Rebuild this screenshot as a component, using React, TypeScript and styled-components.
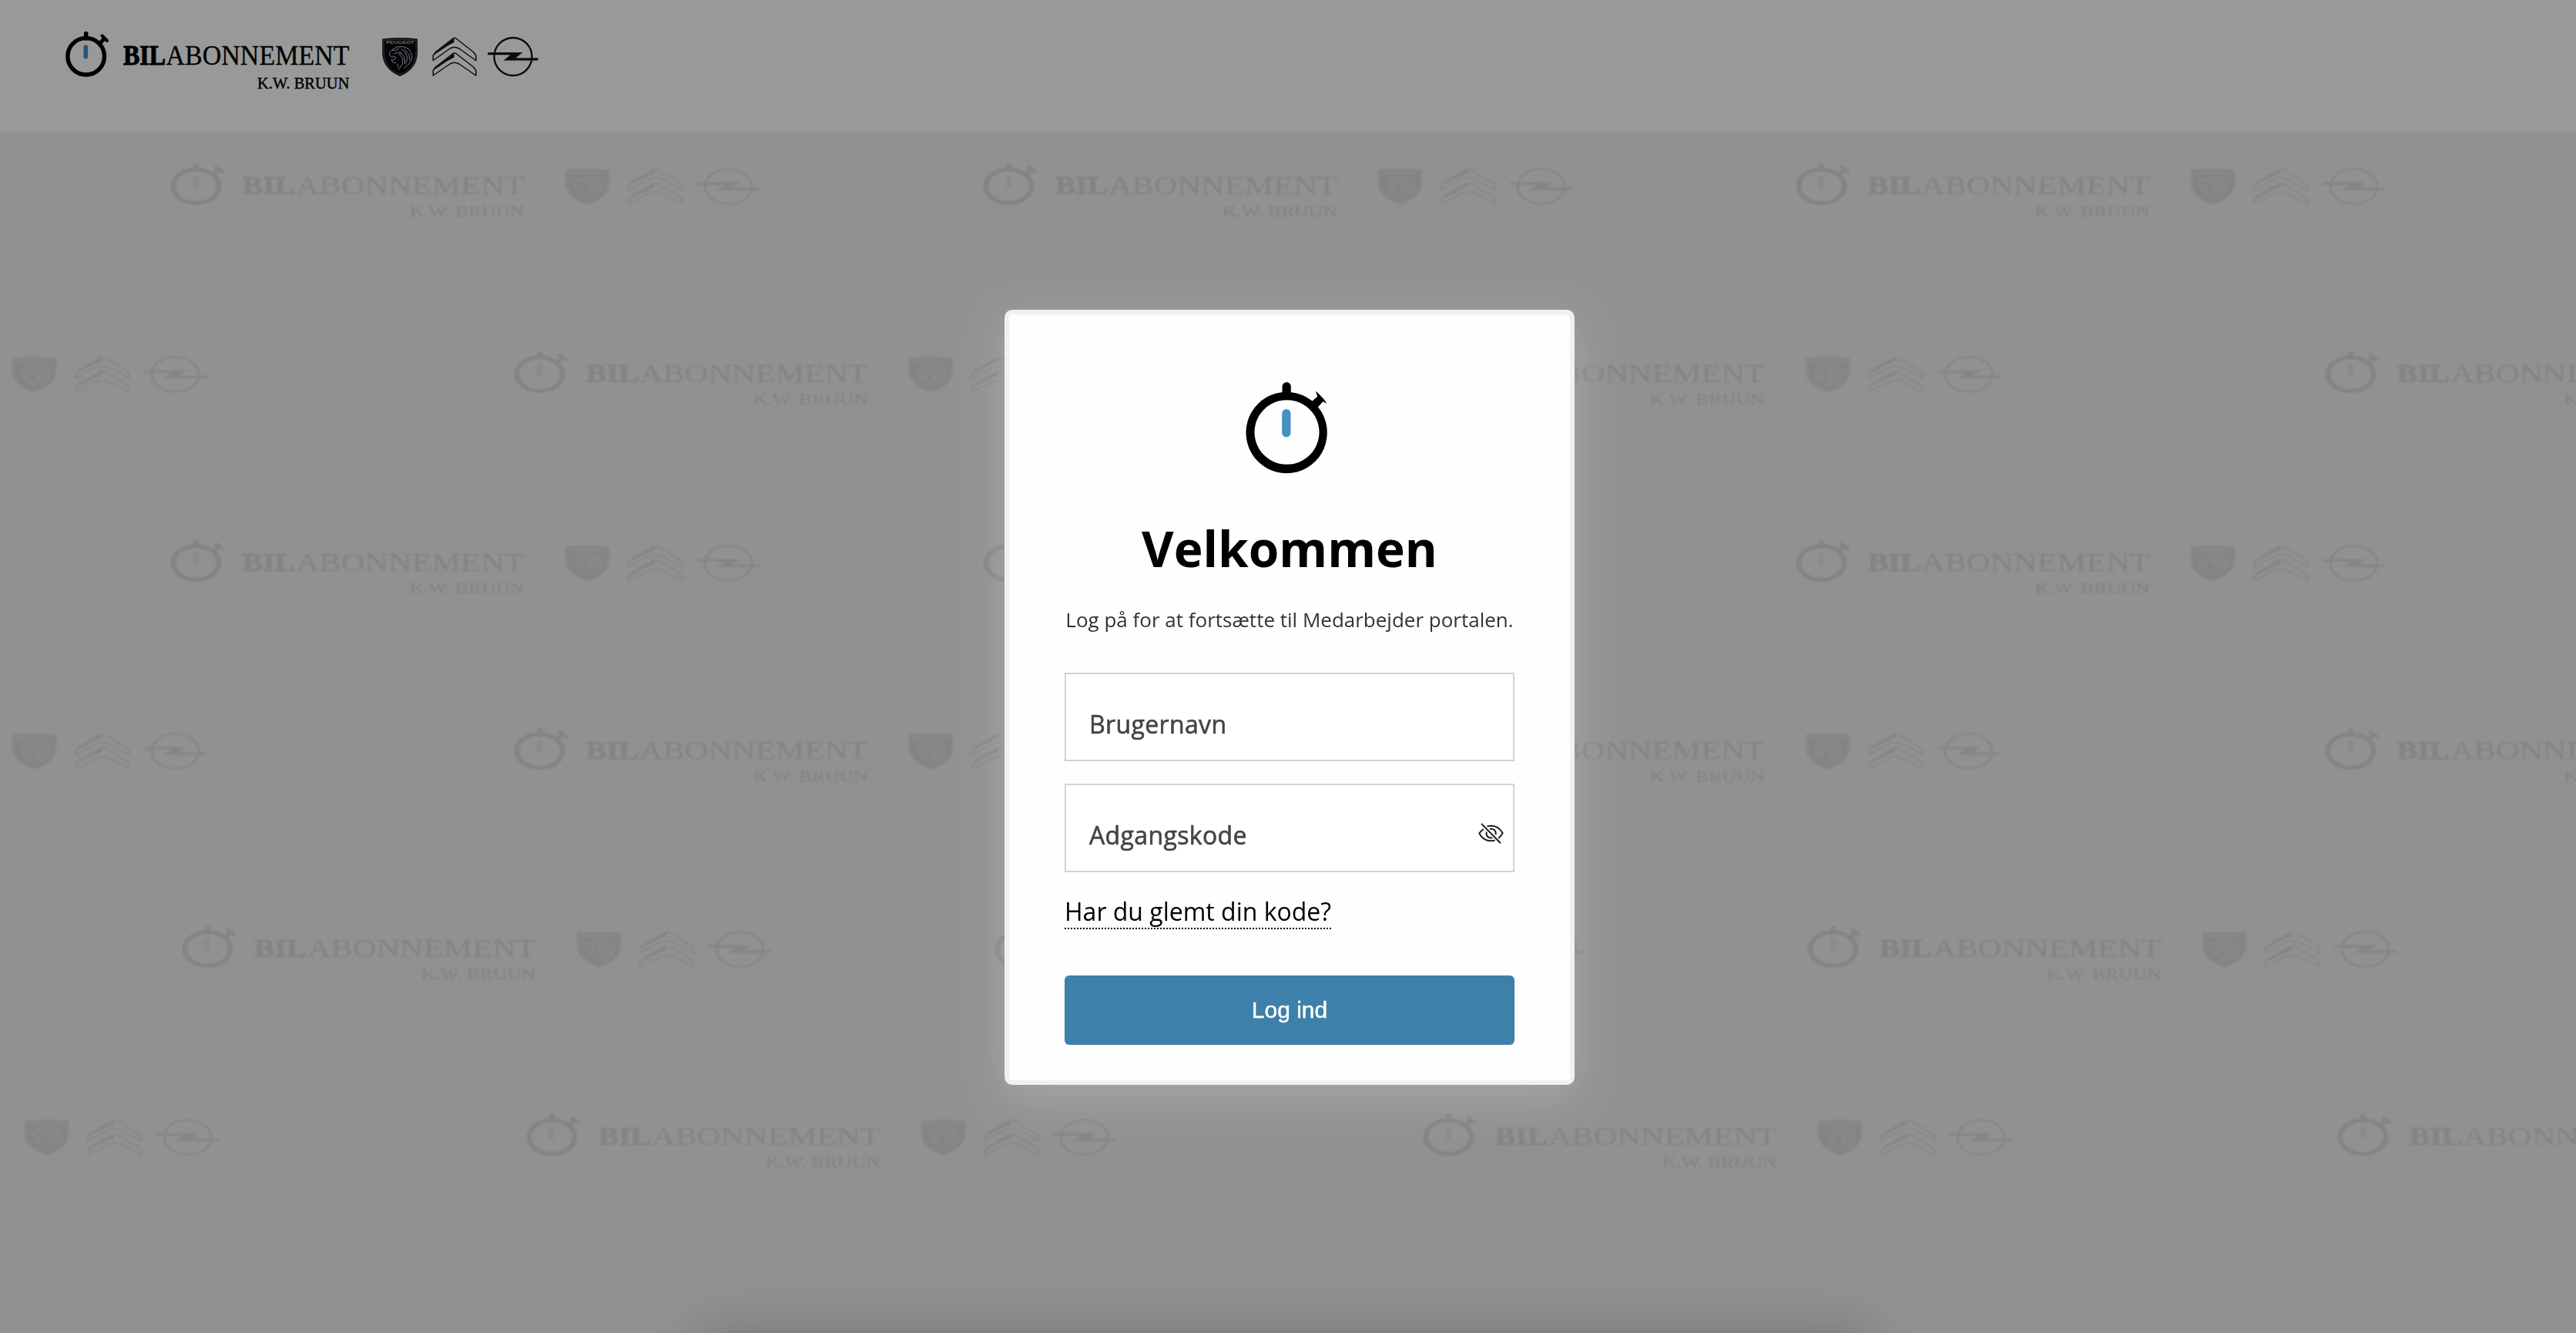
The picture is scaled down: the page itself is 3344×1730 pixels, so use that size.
import React from "react";
import styled, { createGlobalStyle } from "styled-components";

const GlobalStyle = createGlobalStyle`
  * { box-sizing: border-box; }
  html, body { margin: 0; padding: 0; height: 100%; overflow: hidden; }
  body { font-family: "Open Sans", "Noto Sans", sans-serif; background: #f2f2f2; }
  #root { height: 100%; }
`;

const Page = styled.div`
  height: 100vh;
  display: flex;
  flex-direction: column;
  overflow: hidden;
`;

const Header = styled.header`
  flex: none;
  height: 172px;
  padding: 40px 0 0 84px;
  background: #fff;
`;

const Backdrop = styled.main`
  flex: 1;
  min-height: 0;
  padding-top: 39px;
  background: #f2f2f2;
  overflow: hidden;
`;

const PatternRow = styled.div<{ $start: number; $gap: number; $space: number }>`
  display: flex;
  gap: ${(p) => p.$gap}px;
  margin-left: ${(p) => p.$start}px;
  height: ${(p) => p.$space}px;
  opacity: 0.09;
  filter: blur(0.9px);

  & > :nth-child(4) {
    margin-left: 23px;
  }
`;

const LogoSvg = styled.svg<{ $w: number; $h: number }>`
  display: block;
  flex: none;
  width: ${(p) => p.$w}px;
  height: ${(p) => p.$h}px;
  overflow: visible;
`;

const Overlay = styled.div`
  position: fixed;
  inset: 0;
  display: flex;
  align-items: flex-start;
  padding: 402px 0 0 1304px;
  background: rgba(0, 0, 0, 0.4);
`;

const BottomShade = styled.div`
  position: fixed;
  top: 100%;
  left: 905px;
  width: 1525px;
  height: 200px;
  border-radius: 20px;
  box-shadow: 0 0 76px rgba(0, 0, 0, 0.22);
`;

const Modal = styled.section`
  width: 740px;
  height: 1006px;
  padding: 88px 72px 0;
  display: flex;
  flex-direction: column;
  background: #fefefe;
  border: 6px solid #f0f0f0;
  border-radius: 10px;
  box-shadow: 0 14px 60px rgba(255, 255, 255, 0.2);
`;

const WatchSvg = styled.svg`
  display: block;
  flex: none;
  width: 106px;
  height: 119px;
  margin-left: 235px;
`;

const Title = styled.h1`
  margin: 57px 0 0;
  font-size: 64px;
  font-weight: 700;
  line-height: 80px;
  text-align: center;
  color: #000;
`;

const Subtitle = styled.p`
  margin: 32px -4px 49px;
  font-size: 26px;
  line-height: 40px;
  text-align: center;
  white-space: nowrap;
  color: #333;
`;

const Fields = styled.div`
  display: flex;
  flex-direction: column;
  gap: 29px;
`;

const Field = styled.label`
  display: flex;
  justify-content: space-between;
  align-items: flex-start;
  height: 115px;
  padding: 43px 12px 0 30px;
  background: #fff;
  border: 2px solid #d3d3d3;
  font-size: 32px;
  letter-spacing: 0.36px;
  line-height: 44px;
  color: #444;
  -webkit-text-stroke: 0.6px #444;
`;

const EyeSvg = styled.svg`
  display: block;
  width: 33px;
  height: 27px;
  margin-top: 6px;
`;

const Forgot = styled.a`
  align-self: flex-start;
  margin-top: 29px;
  font-size: 32px;
  line-height: 43px;
  white-space: nowrap;
  color: #000;
  border-bottom: 2px dotted #000;
`;

const Submit = styled.button`
  height: 90px;
  margin-top: 60px;
  padding: 0;
  border: 0;
  border-radius: 6px;
  background: #3d80aa;
  color: #fff;
  font-family: "Liberation Sans", Arial, sans-serif;
  font-size: 30px;
  -webkit-text-stroke: 0.4px #fff;
`;

const SERIF = '"Liberation Serif", "Times New Roman", serif';

function Logo({ w, h }: { w: number; h: number }) {
  return (
    <LogoSvg $w={w} $h={h} viewBox="84 40 616 78" preserveAspectRatio="none">
      <circle cx="111.7" cy="73.2" r="23.8" fill="none" stroke="#000" strokeWidth="5.4" />
      <path d="M111.7 43.6V50" stroke="#000" strokeWidth="5.6" strokeLinecap="round" />
      <path d="M128.5 57.5L136 49.5" stroke="#000" strokeWidth="5" />
      <path d="M132.6 46.6L138.9 52.8" stroke="#000" strokeWidth="4.2" strokeLinecap="round" />
      <path d="M111.3 61V73.6" stroke="#4491c3" strokeWidth="5.6" strokeLinecap="round" />

      <g fontFamily={SERIF} fill="#000" stroke="#000">
        <text x="160" y="84" fontSize="35.5" fontWeight="700" strokeWidth="1.1" textLength="55" lengthAdjust="spacingAndGlyphs">BIL</text>
        <text x="215.5" y="84" fontSize="35.5" strokeWidth="0.3" textLength="238" lengthAdjust="spacingAndGlyphs">ABONNEMENT</text>
        <text x="334" y="115.4" fontSize="20" strokeWidth="0.4" textLength="119.5" lengthAdjust="spacingAndGlyphs">K.W. BRUUN</text>
      </g>

      <path d="M496.3 50.4Q519 47.6 542 50.4V68C542 82 534 93 519.2 99C504.5 93 496.3 82 496.3 68Z" fill="#05070c" />
      <path d="M498.2 52Q519 49.7 540.2 52V68C540.2 81 533 91.3 519.2 97C505.5 91.3 498.2 81 498.2 68Z" fill="none" stroke="#8b8b8f" strokeWidth="0.7" />
      <text x="501" y="57.2" fontFamily='"Liberation Sans", sans-serif' fontSize="5.6" fontWeight="700" fill="#b5b5b8" textLength="36.5" lengthAdjust="spacingAndGlyphs">PEUGEOT</text>
      <g fill="none" stroke="#c3c3c6" strokeWidth="1" strokeLinecap="round" strokeLinejoin="round">
        <path d="M506 72L505.5 68.5L509 64.5L515 61L523 60.5L530 63L534 69L535 76L531 83L525 88" />
        <path d="M506 72L508.5 74.5L512 73L514 76L511 78L508 77.5L510 81L514 81.5" />
        <path d="M509 65.5L515 65L518 62.5M512 69.5L517 68L521 70" />
        <path d="M521 64L526 68L529 75L527 82M518 70L523 76L522 84L518 90" />
        <path d="M525 64L531 71L532 78M516 83L517 88M519 67L525 74L525.5 83" />
      </g>

      <g stroke="#151515" strokeWidth="1.5" strokeLinejoin="round">
        <path d="M562.3 78.5V72L565.5 67.5L588.5 49.5L591.5 49.5L614.5 67.5L617.8 72V78.5L596 63Q590 59.500 584 63Z" fill="none" />
        <path d="M563 71.5L566 67.5L589.5 49.5V55L581 59.5Z" fill="#151515" stroke="none" />
        <path d="M562.3 98V91.5L565.5 87L588.5 69L591.5 69L614.5 87L617.8 91.5V98L596 83Q590 79.500 584 83Z" fill="none" />
        <path d="M563 91L566 87L589.5 69V74.5L581 79Z" fill="#151515" stroke="none" />
      </g>

      <circle cx="666" cy="73.5" r="24.5" fill="none" stroke="#151515" strokeWidth="2.3" />
      <path d="M633.5 68H678.5L669.5 75.2H698.8L698 78.6H653.5L662.5 71.3H633Z" fill="#151515" />
    </LogoSvg>
  );
}

function Stopwatch() {
  return (
    <WatchSvg viewBox="171 77 319 357" preserveAspectRatio="none">
      <path
        fillRule="evenodd"
        d="M331 115a158.5 158.5 0 1 1-.1 0ZM332 146.5a126.5 125.5 0 1 0 .1 0Z"
        fill="#000"
      />
      <path d="M314 125V94a17 17 0 0 1 34 0V125Z" fill="#000" />
      <path d="M426 155L451 133Q450 124 443 112Q450 115 460 126L476 142Q484 151 487 162Q480 154 473 153L449 179Z" fill="#000" />
      <rect x="313" y="182" width="34" height="109" rx="17" fill="#4591c1" />
    </WatchSvg>
  );
}

function EyeOff() {
  return (
    <EyeSvg viewBox="118 262 100 80" fill="none" stroke="#1c1c1c" strokeWidth="6" strokeLinecap="round" strokeLinejoin="round">
      <path d="M132 266L204 339" />
      <path d="M155 274C181 268 202 280 214 301C210 309 205 315 199 320" />
      <path d="M137 287C131 291 126 296 122 302C134 326 157 336 181 330" />
      <path d="M165 285C178 282 188 291 187 305" />
      <path d="M150 298C148 312 158 322 171 320" />
    </EyeSvg>
  );
}

const rows = [
  { start: 220, gap: 287, count: 3, space: 244 },
  { start: -498, gap: 396, count: 4, space: 245 },
  { start: 220, gap: 287, count: 3, space: 244 },
  { start: -498, gap: 396, count: 4, space: 257 },
  { start: 235, gap: 287, count: 3, space: 244 },
  { start: -482, gap: 396, count: 4, space: 244 },
];

export default function App() {
  return (
    <Page>
      <GlobalStyle />
      <Header>
        <Logo w={616} h={78} />
      </Header>
      <Backdrop>
        {rows.map((row, i) => (
          <PatternRow key={i} $start={row.start} $gap={row.gap} $space={row.space}>
            {Array.from({ length: row.count }, (_, n) => (
              <Logo key={n} w={768} h={72} />
            ))}
          </PatternRow>
        ))}
      </Backdrop>
      <Overlay>
        <Modal>
          <Stopwatch />
          <Title>Velkommen</Title>
          <Subtitle>Log på for at fortsætte til Medarbejder portalen.</Subtitle>
          <Fields>
            <Field>Brugernavn</Field>
            <Field>
              Adgangskode
              <EyeOff />
            </Field>
          </Fields>
          <Forgot>Har du glemt din kode?</Forgot>
          <Submit type="button">Log ind</Submit>
        </Modal>
      </Overlay>
      <BottomShade />
    </Page>
  );
}
